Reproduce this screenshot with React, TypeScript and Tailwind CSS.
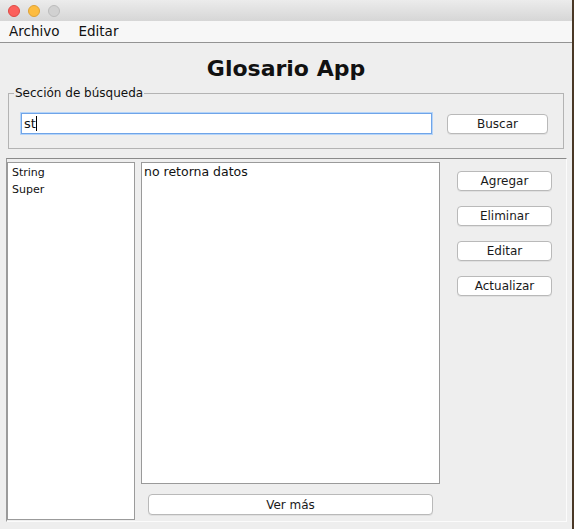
import React from "react";

const F = { fontFamily: '"DejaVu Sans", "Liberation Sans", sans-serif' };

function Btn({ label, className = "" }: { label: string; className?: string }) {
  return (
    <div
      className={
        "flex items-center justify-center bg-white border border-[#b9b9b9] rounded-[4px] text-[12px] leading-none text-[#1a1a1a] shadow-[0_1px_0_rgba(0,0,0,0.06)] " +
        className
      }
    >
      {label}
    </div>
  );
}

export default function App() {
  return (
    <div className="w-[574px] h-[529px] flex bg-[#4a3826] overflow-hidden" style={F}>
      <div className="w-[572px] h-[529px] flex flex-col bg-[#eeeeee]">
        {/* title bar */}
        <div className="h-[21px] flex items-center gap-[8px] pl-[8px] bg-gradient-to-b from-[#ececec] to-[#d6d6d6]">
          <div className="w-[12px] h-[12px] rounded-full bg-[#fc605c] border border-[#de4a44]" />
          <div className="w-[12px] h-[12px] rounded-full bg-[#fdbc40] border border-[#dea236]" />
          <div className="w-[12px] h-[12px] rounded-full bg-[#d1d1d1] border border-[#bcbcbc]" />
        </div>
        {/* menu bar */}
        <div className="h-[22px] flex items-center bg-[#f7f7f7] border-b border-[#939393] text-[13.5px] text-[#111] pl-[9px]">
          <span>Archivo</span>
          <span className="ml-[19px]">Editar</span>
        </div>
        {/* content */}
        <div className="flex-1 flex flex-col">
          <div className="mt-[13px] h-[26px] leading-[26px] text-center text-[22px] font-bold text-[#111]">
            Glosario App
          </div>
          <div className="relative mt-[11px] ml-[8px] w-[556px] h-[56px] border border-[#b3b3b3] pt-[19px] pl-[12px] flex items-start">
            <span className="absolute left-[5px] top-[-8px] px-[1px] bg-[#eeeeee] text-[12px] leading-[14px] text-[#111]">
              Sección de búsqueda
            </span>
            <div className="w-[411px] h-[21px] bg-white border border-[#6fa4e8] shadow-[0_0_0_1px_#b5d4f8] flex items-center pl-[2px] text-[13px] text-[#111]">
              <span>st</span>
              <span className="w-[1px] h-[15px] bg-black" />
            </div>
            <Btn label="Buscar" className="ml-[15px] mt-[1px] w-[101px] h-[20px]" />
          </div>
          <div className="mt-[9px] ml-[6px] w-[561px] h-[364px] border-t border-l border-t-[#8a8a8a] border-l-[#9a9a9a] border-r border-b border-r-[#fbfbfb] border-b-[#fbfbfb] flex pt-[3px]">
            <div className="w-[128px] h-[358px] bg-white border border-[#9b9b9b] pl-[4px] pt-[1px] text-[11px] leading-[17px] text-[#111]">
              <div>String</div>
              <div>Super</div>
            </div>
            <div className="ml-[6px] w-[299px] flex flex-col">
              <div className="h-[322px] bg-white border border-[#9a9a9a] pl-[2px] pt-[1px] text-[12.5px] leading-[15px] text-[#111]">
                no retorna datos
              </div>
              <Btn label="Ver más" className="mt-[10px] mx-[7px] h-[21px]" />
            </div>
            <div className="ml-[17px] w-[95px] flex flex-col gap-[15px] pt-[9px]">
              <Btn label="Agregar" className="h-[20px]" />
              <Btn label="Eliminar" className="h-[20px]" />
              <Btn label="Editar" className="h-[20px]" />
              <Btn label="Actualizar" className="h-[20px]" />
            </div>
          </div>
        </div>
      </div>
      <div className="w-[2px] h-[529px] bg-[#4a3826]" />
    </div>
  );
}
